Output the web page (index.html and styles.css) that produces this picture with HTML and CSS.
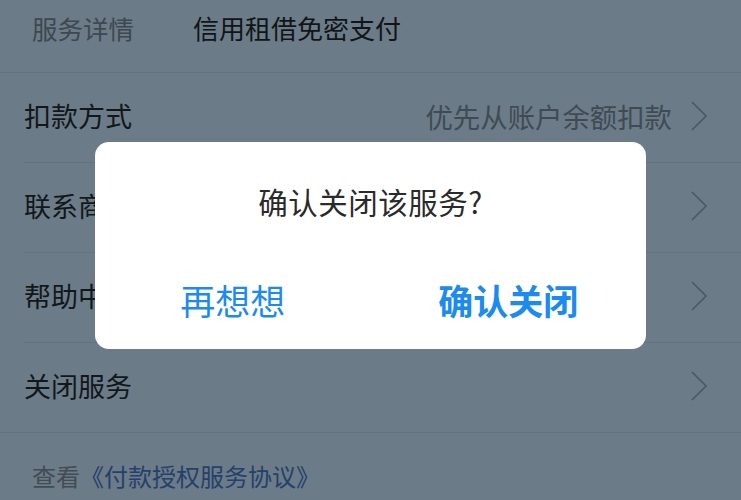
FILE: index.html
```html
<!DOCTYPE html>
<html lang="zh-CN">
  <head>
    <meta charset="UTF-8" />
    <meta name="viewport" content="width=device-width, initial-scale=1.0" />
    <title>服务详情</title>
    <link rel="stylesheet" href="styles.css">
  </head>
  <body>
    <div class="page">
      <div class="header">
        <span class="header-label">服务详情</span>
        <span class="header-title">信用租借免密支付</span>
      </div>

      <div class="list">
        <div class="row">
          <span class="row-label">扣款方式</span>
          <span class="row-value">优先从账户余额扣款</span>
          <svg class="chevron" viewBox="0 0 18 32"><path d="M2 2 L16 16 L2 30" /></svg>
        </div>
        <div class="row">
          <span class="row-label">联系商家</span>
          <svg class="chevron" viewBox="0 0 18 32"><path d="M2 2 L16 16 L2 30" /></svg>
        </div>
        <div class="row">
          <span class="row-label">帮助中心</span>
          <svg class="chevron" viewBox="0 0 18 32"><path d="M2 2 L16 16 L2 30" /></svg>
        </div>
        <div class="row row-last">
          <span class="row-label">关闭服务</span>
          <svg class="chevron" viewBox="0 0 18 32"><path d="M2 2 L16 16 L2 30" /></svg>
        </div>
      </div>

      <div class="footer">
        查看<a class="agreement" href="#">《付款授权服务协议》</a>
      </div>

      <div class="dialog">
        <div class="dialog-title">确认关闭该服务?</div>
        <div class="dialog-actions">
          <button type="button" class="btn">再想想</button>
          <button type="button" class="btn btn-primary">确认关闭</button>
        </div>
      </div>
    </div>
  </body>
</html>
```

FILE: styles.css
```css
html,
body {
  margin: 0;
  padding: 0;
}
body {
  font-family: "Noto Sans CJK SC", "Noto Sans", sans-serif;
  background-color: #6b7b87;
  width: 741px;
  height: 500px;
  overflow: hidden;
}
.page {
  position: relative;
  height: 500px;
}
.header {
  display: flex;
  align-items: center;
  box-sizing: border-box;
  height: 73px;
  padding: 0 0 17px 32px;
  border-bottom: 1px solid #627280;
}
.header-label {
  font-size: 25.5px;
  color: #3d4851;
  width: 161px;
}
.header-title {
  font-size: 26px;
  color: #111518;
}
.list {
  padding-left: 24px;
}
.row {
  display: flex;
  align-items: center;
  box-sizing: border-box;
  height: 90px;
  border-bottom: 1px solid #627280;
  padding: 0 33px 4px 0;
}
.row-last {
  margin-left: -24px;
  padding-left: 24px;
}
.row-label {
  flex: 1;
  font-size: 27px;
  color: #12171b;
}
.row-value {
  font-size: 27.4px;
  color: #3f4b54;
  margin-right: 18px;
}
.chevron {
  width: 18px;
  height: 32px;
}
.chevron path {
  fill: none;
  stroke: #4b5862;
  stroke-width: 1.6;
}
.footer {
  padding: 25px 0 0 32px;
  font-size: 24px;
  color: #414c55;
}
.agreement {
  color: #25406a;
  text-decoration: none;
}
.dialog {
  position: absolute;
  left: 95px;
  top: 142px;
  width: 551px;
  height: 207px;
  background: #fff;
  border-radius: 14px;
  display: flex;
  flex-direction: column;
}
.dialog-title {
  text-align: center;
  font-size: 29.5px;
  letter-spacing: 0.5px;
  color: #2a2a2a;
  padding-top: 38px;
}
.dialog-actions {
  display: grid;
  grid-template-columns: 1fr 1fr;
  margin-top: 52px;
}
.btn {
  font-family: inherit;
  font-size: 35px;
  color: #1b8bef;
  background: none;
  border: none;
  padding: 0;
  cursor: pointer;
}
.btn-primary {
  font-weight: bold;
}
```
